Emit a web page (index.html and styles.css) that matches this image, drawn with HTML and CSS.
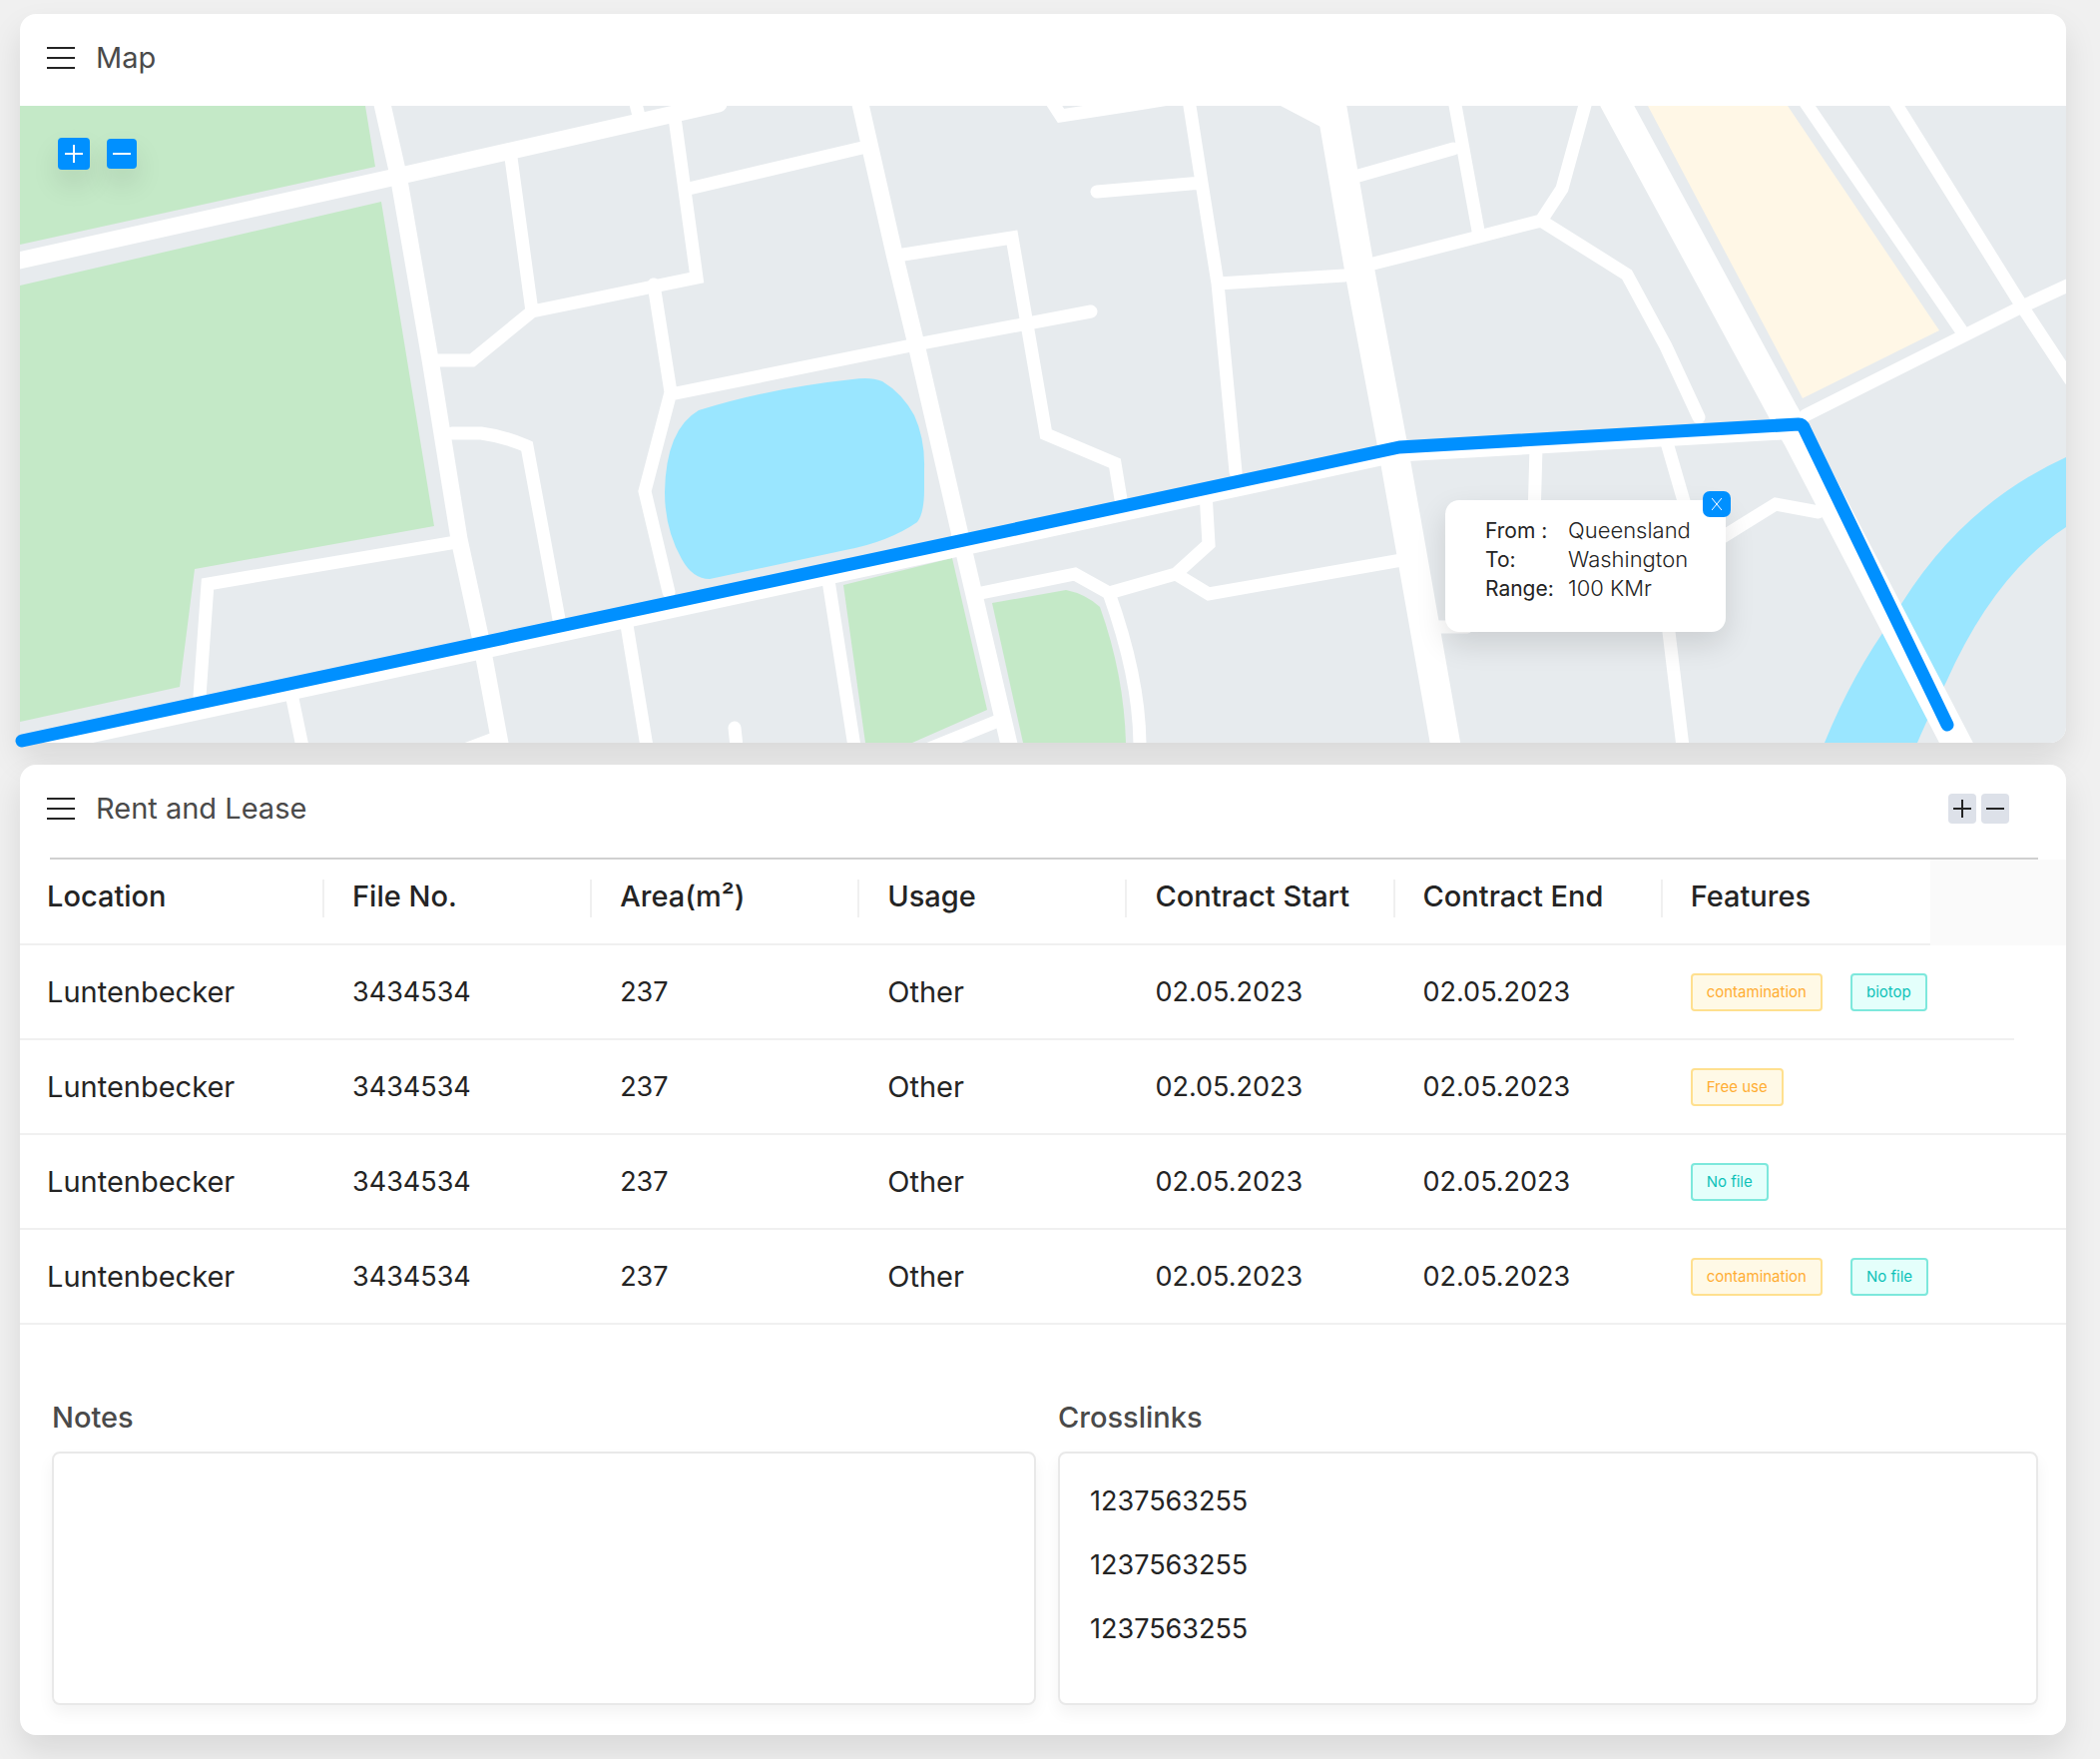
FILE: index.html
```html
<!DOCTYPE html>
<html lang="en">
<head>
<meta charset="utf-8">
<meta name="viewport" content="width=device-width, initial-scale=1">
<title>Map – Rent and Lease</title>
<link rel="stylesheet" href="styles.css">
</head>
<body>
<main class="page">
  <section class="card">
    <header class="card-header">
      <button class="menu" type="button" aria-label="Map menu"><svg width="28" height="24" viewBox="0 0 28 24"><path d="M0 2H28M0 12H28M0 22H28"/></svg></button>
      <h1 class="title">Map</h1>
    </header>
    <div class="map">
      <svg class="map-art" viewBox="20 106 2050 638" aria-hidden="true">
        <defs>
          <clipPath id="frame"><path d="M20 106H2070V728A16 16 0 0 1 2054 744H20Z"/></clipPath>
        </defs>
        <g clip-path="url(#frame)">
          <path class="land" d="M20 106H2070V744H20Z"/>
          <g class="park">
            <path d="M20 106H366L376 167L20 245Z"/>
            <path d="M20 286L382 202L435 527L195 570L180 688L20 723Z"/>
            <path d="M845 586L954 559L989 711L914 744H867Z"/>
            <path d="M994 604L1068 591Q1088 595 1102 608Q1126 675 1128 744H1025Z"/>
          </g>
          <path class="plaza" d="M1651 106H1791L1943 331L1806 399Z"/>
          <g class="water">
            <path d="M700 411Q770 389 854 380Q872 377 884 382Q904 394 916 416Q927 440 926 470V490Q926 514 919 523Q890 543 847 551L711 580Q694 580 683 560Q666 530 666 493Q667 430 700 411Z"/>
            <path d="M2070 458Q1960 508 1896 620Q1856 675 1828 744H1921Q1931 720 1950 683Q1998 575 2070 528Z"/>
          </g>
          <g class="road">
            <path d="M512 158L533 312L473 361H438M533 312L698 278L676 118M636 100L641 120"/>
            <path d="M690 189L868 147M655 285L672 393L646 492L670 593M672 395L918 345L1093 312"/>
            <path d="M453 434H482Q505 437 528 447L560 620M457 543L208 585L200 697"/>
            <path d="M292 695L303 748M627 620L648 748M468 750L500 738M736 729L738 748"/>
            <path d="M829 575L856 748M926 752L1000 722"/>
            <path d="M983 594L1077 575L1111 594L1178 575L1211 545L1208 494M1178 575L1211 595L1410 560"/>
            <path d="M1111 594Q1142 680 1142 748M905 255L1014 238L1048 435L1117 464L1123 500"/>
            <path d="M1050 96L1063 116L1140 104L1190 96M1191 100L1204 183L1220 284L1238 473M1099 192L1204 183M1220 284L1347 276"/>
            <path d="M1361 176L1400 165L1456 149M1457 100L1481 231M1376 264L1400 258L1544 221L1565 189L1590 98M1544 221L1630 275L1669 347L1702 418M1669 440L1687 502L1660 560L1672 633L1686 748"/>
            <path d="M1539 448L1537 520M1435 628H1470M1700 554L1779 505L1822 513"/>
            <path d="M1807 100L1965 331M1897 100L2026 307L2074 380M1809 416L2026 307L2076 284"/>
          </g>
          <g class="road road-main">
            <path d="M10 263L397 177L720 104"/>
            <path d="M382 100L399 175L431 360L460 540L481 637L502 750"/>
            <path d="M861 100L896 254L918 345L962 536L1012 750"/>
            <path d="M20 751L1402 454L1802 431"/>
          </g>
          <path class="flare" d="M1283 106L1325 128L1345 106Z"/>
          <path class="road road-wide" d="M1333 100L1363 275L1397 456L1449 750M1617 100L1786 412L1802 440L1963 750"/>
        </g>
        <path class="route" d="M22 742L1402 448L1802 425Q1806 425 1808 430L1951 726"/>
      </svg>
      <div class="map-zoom">
        <button class="map-btn" type="button" aria-label="Zoom in"><svg width="20" height="20" viewBox="0 0 20 20"><path d="M1 10H19M10 1V19"/></svg></button>
        <button class="map-btn map-btn-small" type="button" aria-label="Zoom out"><svg width="20" height="20" viewBox="0 0 20 20"><path d="M1 10H19"/></svg></button>
      </div>
      <aside class="popup">
        <dl class="trip">
          <dt>From :</dt><dd>Queensland</dd>
          <dt>To:</dt><dd>Washington</dd>
          <dt>Range:</dt><dd>100 KMr</dd>
        </dl>
        <button class="close" type="button" aria-label="Close"><svg width="10" height="12" viewBox="0 0 10 12"><path d="M0 0L10 12M10 0L0 12"/></svg></button>
      </aside>
    </div>
  </section>

  <section class="card">
    <header class="card-header">
      <button class="menu" type="button" aria-label="Rent and Lease menu"><svg width="28" height="24" viewBox="0 0 28 24"><path d="M0 2H28M0 12H28M0 22H28"/></svg></button>
      <h2 class="title">Rent and Lease</h2>
      <div class="tools">
        <button class="tool" type="button" aria-label="Add row"><svg width="18" height="18" viewBox="0 0 18 18"><path d="M0 9H18M9 0V18"/></svg></button>
        <button class="tool" type="button" aria-label="Remove row"><svg width="18" height="18" viewBox="0 0 18 18"><path d="M0 9H18"/></svg></button>
      </div>
    </header>
    <hr class="rule">
    <table class="leases">
      <colgroup><col class="col-first"><col class="col"><col class="col"><col class="col"><col class="col"><col class="col"><col class="col"><col></colgroup>
      <thead>
        <tr><th>Location</th><th>File No.</th><th>Area(m²)</th><th>Usage</th><th>Contract Start</th><th>Contract End</th><th>Features</th><td class="spare"></td></tr>
      </thead>
      <tbody>
        <tr class="short-line"><td>Luntenbecker</td><td class="num">3434534</td><td class="num">237</td><td>Other</td><td class="num">02.05.2023</td><td class="num">02.05.2023</td><td><div class="tags"><span class="tag tag-gold">contamination</span><span class="tag tag-cyan">biotop</span></div></td><td></td></tr>
        <tr><td>Luntenbecker</td><td class="num">3434534</td><td class="num">237</td><td>Other</td><td class="num">02.05.2023</td><td class="num">02.05.2023</td><td><div class="tags"><span class="tag tag-gold">Free use</span></div></td><td></td></tr>
        <tr><td>Luntenbecker</td><td class="num">3434534</td><td class="num">237</td><td>Other</td><td class="num">02.05.2023</td><td class="num">02.05.2023</td><td><div class="tags"><span class="tag tag-cyan">No file</span></div></td><td></td></tr>
        <tr><td>Luntenbecker</td><td class="num">3434534</td><td class="num">237</td><td>Other</td><td class="num">02.05.2023</td><td class="num">02.05.2023</td><td><div class="tags"><span class="tag tag-gold">contamination</span><span class="tag tag-cyan">No file</span></div></td><td></td></tr>
      </tbody>
    </table>
    <div class="panels">
      <div class="panel">
        <label class="panel-title" for="notes">Notes</label>
        <textarea class="box" id="notes"></textarea>
      </div>
      <div class="panel">
        <h3 class="panel-title">Crosslinks</h3>
        <ul class="box links">
          <li><a href="#">1237563255</a></li>
          <li><a href="#">1237563255</a></li>
          <li><a href="#">1237563255</a></li>
        </ul>
      </div>
    </div>
  </section>
</main>
</body>
</html>
```
FILE: styles.css
```css
* {
  box-sizing: border-box;
}

body {
  margin: 0;
  background: #f0f0f0;
  color: #242424;
  font-family: Inter, "Open Sans", sans-serif;
  font-size: 29px;
  line-height: 40px;
}

button {
  display: flex;
  align-items: center;
  justify-content: center;
  padding: 0;
  border: 0;
  background: none;
  cursor: pointer;
}

svg {
  display: block;
  fill: none;
}

.page {
  display: flex;
  flex-direction: column;
  gap: 22px;
  padding: 14px 34px 24px 20px;
}

.card {
  background: #fff;
  border-radius: 16px;
  box-shadow: 0 16px 32px rgba(0, 0, 0, 0.1);
}

.card:first-child {
  border-bottom-left-radius: 0;
}

.card-header {
  display: flex;
  align-items: center;
  gap: 21px;
  height: 92px;
  padding: 0 57px 4px 27px;
}

.menu svg {
  stroke: #242424;
  stroke-width: 2;
}

.title {
  margin: 0;
  color: #4a4a4a;
  font-size: 29px;
  font-weight: 400;
}

/* Map */

.map {
  position: relative;
}

.map-art {
  width: 100%;
  height: auto;
  overflow: visible;
}

.land {
  fill: #e7ebee;
}

.park {
  fill: #c4e9c7;
}

.plaza {
  fill: #fff7e6;
}

.water {
  fill: #9ae6ff;
}

.road {
  stroke: #fff;
  stroke-width: 13;
  stroke-linecap: round;
  stroke-linejoin: miter;
}

.road-main {
  stroke-width: 17;
}

.road-wide {
  stroke-width: 30;
}

.flare {
  fill: #fff;
}

.route {
  stroke: #0090ff;
  stroke-width: 13;
  stroke-linecap: round;
  stroke-linejoin: round;
}

.map-zoom {
  position: absolute;
  top: 32px;
  left: 38px;
  display: flex;
  align-items: center;
  gap: 17px;
}

.map-btn {
  width: 32px;
  height: 32px;
  background: #0090ff;
  border-radius: 4px;
  box-shadow: 0 14px 28px rgba(0, 0, 0, 0.1);
}

.map-btn-small {
  width: 30px;
  height: 30px;
}

.map-btn svg {
  stroke: #fff;
  stroke-width: 2;
}

.popup {
  position: absolute;
  top: 395px;
  right: 341px;
  width: 281px;
  height: 132px;
  padding: 16px 0 0 40px;
  background: #fff;
  border-radius: 14px;
  box-shadow: 0 12px 30px rgba(0, 0, 0, 0.12);
}

.trip {
  display: grid;
  grid-template-columns: 83px 1fr;
  margin: 0;
  font-size: 21px;
  line-height: 29px;
}

.trip dd {
  margin: 0;
  font-size: 22px;
  font-weight: 300;
}

.close {
  position: absolute;
  top: -9px;
  right: -5px;
  width: 28px;
  height: 26px;
  background: #0090ff;
  border-radius: 7px;
}

.close svg {
  stroke: #fff;
  stroke-width: 1;
}

/* Lease table */

.tools {
  display: flex;
  gap: 5px;
  margin-left: auto;
}

.tool {
  width: 28px;
  height: 30px;
  background: #dde1e9;
  border-radius: 4px;
}

.tool svg {
  stroke: #242424;
  stroke-width: 2;
}

.rule {
  height: 2px;
  margin: 1px 28px 0 30px;
  border: 0;
  background: #d0d0d0;
}

.leases {
  width: 100%;
  table-layout: fixed;
  border-collapse: separate;
  border-spacing: 0;
}

.col-first {
  width: 14.88%;
}

.col {
  width: 13.08%;
}

.leases th,
.leases td {
  padding: 0 0 0 28px;
  border-bottom: 2px solid #f0f0f0;
  text-align: left;
  white-space: nowrap;
}

.leases th {
  height: 86px;
  padding-bottom: 10px;
  background: linear-gradient(#f0f0f0, #f0f0f0) right 20px / 2px 38px no-repeat;
  font-weight: 500;
}

.leases th:nth-child(7) {
  background: none;
}

.leases th:first-child,
.leases td:first-child {
  padding-left: 27px;
}

.leases tbody td {
  height: 95px;
}

.leases .num {
  font-size: 27px;
}

.leases .spare {
  background: #fafafa;
  border-bottom-color: #fafafa;
}

.leases .short-line td:last-child {
  background: linear-gradient(#f0f0f0, #f0f0f0) left bottom / 84px 2px no-repeat border-box;
  border-bottom-color: transparent;
}

.tags {
  display: flex;
  gap: 28px;
}

.tag {
  padding: 0 14px;
  border: 2px solid;
  border-radius: 4px;
  font-size: 15px;
  line-height: 34px;
}

.tag-gold {
  background: #fff9e6;
  border-color: #ffe08f;
  color: #ffad33;
}

.tag-cyan {
  background: #e4fffb;
  border-color: #7de8dc;
  color: #0dc2b8;
}

/* Notes and crosslinks */

.panels {
  display: grid;
  grid-template-columns: 493fr 491fr;
  gap: 22px;
  padding: 73px 28px 30px 32px;
}

.panel {
  display: flex;
  flex-direction: column;
  gap: 14px;
}

.panel-title {
  margin: 0;
  color: #4a4a4a;
  font-size: 29px;
  font-weight: 500;
}

.box {
  width: 100%;
  height: 254px;
  margin: 0;
  border: 2px solid #e9e9e9;
  border-radius: 8px;
  background: #fff;
  box-shadow: 0 8px 16px rgba(0, 0, 0, 0.05);
  font-family: inherit;
  font-size: 27px;
  resize: none;
}

.links {
  display: flex;
  flex-direction: column;
  gap: 24px;
  padding: 28px 30px;
  list-style: none;
}

.links a {
  color: inherit;
  text-decoration: none;
}
```
